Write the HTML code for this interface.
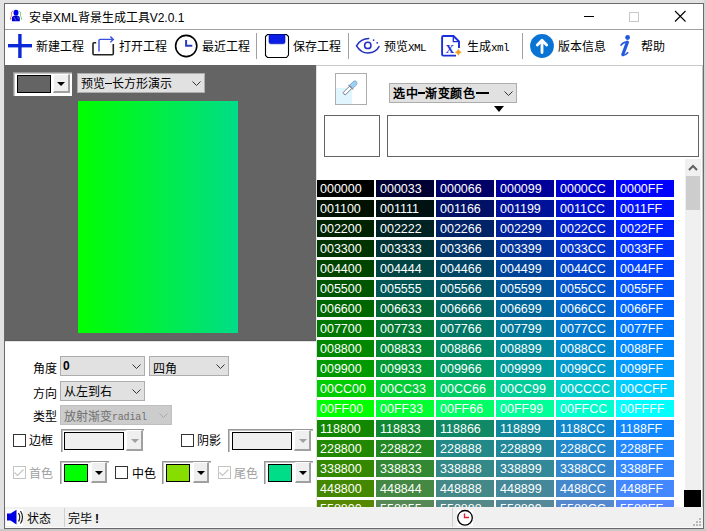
<!DOCTYPE html>
<html lang="zh-CN">
<head>
<meta charset="utf-8">
<style>
html,body{margin:0;padding:0;}
body{width:706px;height:531px;overflow:hidden;position:relative;background:#e2e2e2;font-family:"Liberation Sans",sans-serif;font-size:12px;color:#000;}
.a{position:absolute;}
.t{position:absolute;white-space:nowrap;line-height:16px;font-size:12px;}
.win{left:4px;top:3px;width:700px;height:526px;box-sizing:border-box;border:1px solid #6a6a6a;background:#fff;}
.sep{position:absolute;width:1px;background:#a0a0a0;}
.cb{position:absolute;box-sizing:border-box;border:1px solid #adadad;background:#e1e1e1;height:20px;}
.cb.dis{background:#cccccc;border-color:#bfbfbf;}
.chev{position:absolute;width:9px;height:5px;}
.cell{position:absolute;width:58px;height:17px;color:#fff;font-size:12.5px;line-height:19px;text-indent:4px;white-space:nowrap;overflow:hidden;}
.chk{position:absolute;width:13px;height:13px;box-sizing:border-box;border:1px solid #333;background:#fff;}
.chk.dis{border-color:#c4c4c4;}
.cc{position:absolute;box-sizing:border-box;background:#fff;border-top:1px solid #969696;border-left:1px solid #969696;box-shadow:inset 1px 1px 0 #c4c4c4;}
.sw{position:absolute;box-sizing:border-box;border:1px solid #000;}
.btn{position:absolute;box-sizing:border-box;background:#efefef;border-top:1px solid #fff;border-left:1px solid #fff;border-right:2px solid #a0a0a0;border-bottom:2px solid #a0a0a0;}
.tri{position:absolute;width:0;height:0;border-left:4px solid transparent;border-right:4px solid transparent;border-top:4px solid #000;}
.mono{font-family:"Liberation Mono",monospace;font-size:11px;letter-spacing:-0.6px;}
.dash{display:inline-block;height:1px;background:currentColor;vertical-align:4px;}
</style>
</head>
<body>
<div class="a" style="left:704px;top:0;width:2px;height:531px;background:#d3d3d3"></div>
<div class="a" style="left:0;top:529px;width:706px;height:2px;background:#c8c8c8"></div>
<div class="a win"></div>
<!-- title bar -->
<div class="a" style="left:5px;top:29px;width:698px;height:1px;background:#a0a0a0"></div>
<div class="t" style="left:29px;top:10px;">安卓XML背景生成工具V2.0.1</div>
<div class="a" style="left:584px;top:16px;width:10px;height:1px;background:#000"></div>
<div class="a" style="left:629px;top:12px;width:10px;height:10px;box-sizing:border-box;border:1px solid #c8c8c8"></div>
<!-- toolbar -->
<div class="t" style="left:36px;top:39px;">新建工程</div>
<div class="t" style="left:119px;top:39px;">打开工程</div>
<div class="t" style="left:202px;top:39px;">最近工程</div>
<div class="t" style="left:293px;top:39px;">保存工程</div>
<div class="t" style="left:384px;top:39px;">预览<span class="mono">XML</span></div>
<div class="t" style="left:467px;top:39px;">生成<span class="mono">xml</span></div>
<div class="t" style="left:558px;top:39px;">版本信息</div>
<div class="t" style="left:641px;top:39px;">帮助</div>
<div class="sep" style="left:256px;top:33px;height:26px"></div>
<div class="sep" style="left:348px;top:33px;height:26px"></div>
<div class="sep" style="left:522px;top:33px;height:26px"></div>
<!-- right panel top line -->
<div class="a" style="left:316px;top:65px;width:387px;height:1px;background:#c8c8c8"></div>
<div class="a" style="left:316px;top:66px;width:1px;height:441px;background:#e0e0e0"></div>
<!-- dark panel -->
<div class="a" style="left:5px;top:65px;width:311px;height:276px;background:#646464"></div>
<div class="a" style="left:5px;top:340px;width:311px;height:1px;background:#5c5c5c"></div>
<div class="a" style="left:5px;top:341px;width:311px;height:1px;background:#e4e4e4"></div>
<div class="cc" style="left:13px;top:72px;width:59px;height:24px;"></div>
<div class="sw" style="left:17px;top:75px;width:34px;height:18px;background:#646464"></div>
<div class="btn" style="left:53px;top:74px;width:17px;height:19px;"></div>
<div class="tri" style="left:57px;top:82px;"></div>
<div class="cb" style="left:77px;top:73px;width:128px;"></div>
<div class="t" style="left:81px;top:76px;">预览<span class="dash" style="width:7px"></span>长方形演示</div>
<svg class="chev" style="left:192px;top:81px" viewBox="0 0 9 5"><path d="M0.5 0.5L4.5 4.5L8.5 0.5" fill="none" stroke="#333" stroke-width="1"/></svg>
<div class="a" style="left:78px;top:101px;width:160px;height:232px;background:linear-gradient(to right,#00ff00,#00dd88)"></div>
<!-- lower left panel -->
<div class="t" style="left:33px;top:361px;">角度</div>
<div class="t" style="left:33px;top:386px;">方向</div>
<div class="t" style="left:33px;top:409px;">类型</div>
<div class="cb" style="left:60px;top:356px;width:85px;"></div>
<div class="t" style="left:63px;top:358px;font-weight:bold;font-size:12px;">0</div>
<svg class="chev" style="left:132px;top:364px" viewBox="0 0 9 5"><path d="M0.5 0.5L4.5 4.5L8.5 0.5" fill="none" stroke="#333" stroke-width="1"/></svg>
<div class="cb" style="left:149px;top:356px;width:80px;"></div>
<div class="t" style="left:153px;top:361px;">四角</div>
<svg class="chev" style="left:216px;top:364px" viewBox="0 0 9 5"><path d="M0.5 0.5L4.5 4.5L8.5 0.5" fill="none" stroke="#333" stroke-width="1"/></svg>
<div class="cb" style="left:60px;top:381px;width:85px;"></div>
<div class="t" style="left:64px;top:384px;">从左到右</div>
<svg class="chev" style="left:132px;top:389px" viewBox="0 0 9 5"><path d="M0.5 0.5L4.5 4.5L8.5 0.5" fill="none" stroke="#333" stroke-width="1"/></svg>
<div class="cb dis" style="left:60px;top:405px;width:112px;"></div>
<div class="t" style="left:64px;top:409px;color:#707070">放射渐变<span class="mono" style="font-size:10px;letter-spacing:-0.2px;vertical-align:1.5px">radial</span></div>
<svg class="chev" style="left:159px;top:413px" viewBox="0 0 9 5"><path d="M0.5 0.5L4.5 4.5L8.5 0.5" fill="none" stroke="#a8a8a8" stroke-width="1"/></svg>

<div class="chk" style="left:13px;top:434px;"></div>
<div class="t" style="left:29px;top:433px;">边框</div>
<div class="cc" style="left:61px;top:429px;width:83px;height:23px;"></div>
<div class="sw" style="left:64px;top:432px;width:60px;height:18px;background:#f0f0f0"></div>
<div class="btn" style="left:126px;top:430px;width:17px;height:21px;"></div>
<div class="tri" style="left:131px;top:439px;border-top-color:#a0a0a0"></div>

<div class="chk" style="left:181px;top:434px;"></div>
<div class="t" style="left:197px;top:433px;">阴影</div>
<div class="cc" style="left:228px;top:429px;width:85px;height:23px;"></div>
<div class="sw" style="left:232px;top:432px;width:60px;height:18px;background:#f0f0f0"></div>
<div class="btn" style="left:294px;top:430px;width:17px;height:21px;"></div>
<div class="tri" style="left:299px;top:439px;border-top-color:#a0a0a0"></div>

<div class="chk dis" style="left:13px;top:466px;"></div>
<svg class="a" style="left:13px;top:466px" width="13" height="13" viewBox="0 0 13 13"><path d="M1.5 6.5L4.5 9.5L10.5 3.5" fill="none" stroke="#c4c4c4" stroke-width="1.1"/></svg>
<div class="t" style="left:29px;top:466px;color:#a0a0a0">首色</div>
<div class="cc" style="left:60px;top:461px;width:49px;height:23px;"></div>
<div class="sw" style="left:64px;top:464px;width:24px;height:18px;background:#00ff00"></div>
<div class="btn" style="left:91px;top:462px;width:16px;height:21px;"></div>
<div class="tri" style="left:95px;top:471px;"></div>

<div class="chk" style="left:115px;top:466px;"></div>
<div class="t" style="left:132px;top:466px;">中色</div>
<div class="cc" style="left:162px;top:461px;width:49px;height:23px;"></div>
<div class="sw" style="left:166px;top:464px;width:24px;height:18px;background:#88dd00"></div>
<div class="btn" style="left:193px;top:462px;width:16px;height:21px;"></div>
<div class="tri" style="left:197px;top:471px;"></div>

<div class="chk dis" style="left:218px;top:466px;"></div>
<svg class="a" style="left:218px;top:466px" width="13" height="13" viewBox="0 0 13 13"><path d="M1.5 6.5L4.5 9.5L10.5 3.5" fill="none" stroke="#c4c4c4" stroke-width="1.1"/></svg>
<div class="t" style="left:234px;top:466px;color:#a0a0a0">尾色</div>
<div class="cc" style="left:264px;top:461px;width:49px;height:23px;"></div>
<div class="sw" style="left:268px;top:464px;width:24px;height:18px;background:#00dd88"></div>
<div class="btn" style="left:295px;top:462px;width:16px;height:21px;"></div>
<div class="tri" style="left:299px;top:471px;"></div>

<!-- right top -->
<div class="a" style="left:335px;top:73px;width:32px;height:32px;box-sizing:border-box;border:1px solid #adadad;background:#fff"></div>
<div class="a" style="left:336px;top:88px;width:16px;height:16px;background:#e0f5fd"></div>
<div class="cb" style="left:389px;top:83px;width:128px;"></div>
<div class="t" style="left:393px;top:86px;font-weight:bold;letter-spacing:0.5px">选中<span class="dash" style="width:7px;height:2px"></span>渐变颜色<span class="dash" style="width:13px;height:2px;margin-left:1px"></span></div>
<svg class="chev" style="left:504px;top:91px" viewBox="0 0 9 5"><path d="M0.5 0.5L4.5 4.5L8.5 0.5" fill="none" stroke="#333" stroke-width="1"/></svg>
<div class="a" style="left:494px;top:106px;width:0;height:0;border-left:5px solid transparent;border-right:5px solid transparent;border-top:6px solid #000"></div>
<div class="a" style="left:324px;top:115px;width:56px;height:42px;box-sizing:border-box;border:1px solid #646464;"></div>
<div class="a" style="left:387px;top:115px;width:312px;height:42px;box-sizing:border-box;border:1px solid #646464;"></div>

<!-- grid -->
<div class="a" style="left:317px;top:159px;width:368px;height:348px;overflow:hidden;">
<div class="cell" style="left:-1px;top:21px;background:#000000">000000</div>
<div class="cell" style="left:59px;top:21px;background:#000033">000033</div>
<div class="cell" style="left:119px;top:21px;background:#000066">000066</div>
<div class="cell" style="left:179px;top:21px;background:#000099">000099</div>
<div class="cell" style="left:239px;top:21px;background:#0000CC">0000CC</div>
<div class="cell" style="left:299px;top:21px;background:#0000FF">0000FF</div>
<div class="cell" style="left:-1px;top:41px;background:#001100">001100</div>
<div class="cell" style="left:59px;top:41px;background:#001111">001111</div>
<div class="cell" style="left:119px;top:41px;background:#001166">001166</div>
<div class="cell" style="left:179px;top:41px;background:#001199">001199</div>
<div class="cell" style="left:239px;top:41px;background:#0011CC">0011CC</div>
<div class="cell" style="left:299px;top:41px;background:#0011FF">0011FF</div>
<div class="cell" style="left:-1px;top:61px;background:#002200">002200</div>
<div class="cell" style="left:59px;top:61px;background:#002222">002222</div>
<div class="cell" style="left:119px;top:61px;background:#002266">002266</div>
<div class="cell" style="left:179px;top:61px;background:#002299">002299</div>
<div class="cell" style="left:239px;top:61px;background:#0022CC">0022CC</div>
<div class="cell" style="left:299px;top:61px;background:#0022FF">0022FF</div>
<div class="cell" style="left:-1px;top:81px;background:#003300">003300</div>
<div class="cell" style="left:59px;top:81px;background:#003333">003333</div>
<div class="cell" style="left:119px;top:81px;background:#003366">003366</div>
<div class="cell" style="left:179px;top:81px;background:#003399">003399</div>
<div class="cell" style="left:239px;top:81px;background:#0033CC">0033CC</div>
<div class="cell" style="left:299px;top:81px;background:#0033FF">0033FF</div>
<div class="cell" style="left:-1px;top:101px;background:#004400">004400</div>
<div class="cell" style="left:59px;top:101px;background:#004444">004444</div>
<div class="cell" style="left:119px;top:101px;background:#004466">004466</div>
<div class="cell" style="left:179px;top:101px;background:#004499">004499</div>
<div class="cell" style="left:239px;top:101px;background:#0044CC">0044CC</div>
<div class="cell" style="left:299px;top:101px;background:#0044FF">0044FF</div>
<div class="cell" style="left:-1px;top:121px;background:#005500">005500</div>
<div class="cell" style="left:59px;top:121px;background:#005555">005555</div>
<div class="cell" style="left:119px;top:121px;background:#005566">005566</div>
<div class="cell" style="left:179px;top:121px;background:#005599">005599</div>
<div class="cell" style="left:239px;top:121px;background:#0055CC">0055CC</div>
<div class="cell" style="left:299px;top:121px;background:#0055FF">0055FF</div>
<div class="cell" style="left:-1px;top:141px;background:#006600">006600</div>
<div class="cell" style="left:59px;top:141px;background:#006633">006633</div>
<div class="cell" style="left:119px;top:141px;background:#006666">006666</div>
<div class="cell" style="left:179px;top:141px;background:#006699">006699</div>
<div class="cell" style="left:239px;top:141px;background:#0066CC">0066CC</div>
<div class="cell" style="left:299px;top:141px;background:#0066FF">0066FF</div>
<div class="cell" style="left:-1px;top:161px;background:#007700">007700</div>
<div class="cell" style="left:59px;top:161px;background:#007733">007733</div>
<div class="cell" style="left:119px;top:161px;background:#007766">007766</div>
<div class="cell" style="left:179px;top:161px;background:#007799">007799</div>
<div class="cell" style="left:239px;top:161px;background:#0077CC">0077CC</div>
<div class="cell" style="left:299px;top:161px;background:#0077FF">0077FF</div>
<div class="cell" style="left:-1px;top:181px;background:#008800">008800</div>
<div class="cell" style="left:59px;top:181px;background:#008833">008833</div>
<div class="cell" style="left:119px;top:181px;background:#008866">008866</div>
<div class="cell" style="left:179px;top:181px;background:#008899">008899</div>
<div class="cell" style="left:239px;top:181px;background:#0088CC">0088CC</div>
<div class="cell" style="left:299px;top:181px;background:#0088FF">0088FF</div>
<div class="cell" style="left:-1px;top:201px;background:#009900">009900</div>
<div class="cell" style="left:59px;top:201px;background:#009933">009933</div>
<div class="cell" style="left:119px;top:201px;background:#009966">009966</div>
<div class="cell" style="left:179px;top:201px;background:#009999">009999</div>
<div class="cell" style="left:239px;top:201px;background:#0099CC">0099CC</div>
<div class="cell" style="left:299px;top:201px;background:#0099FF">0099FF</div>
<div class="cell" style="left:-1px;top:221px;background:#00CC00">00CC00</div>
<div class="cell" style="left:59px;top:221px;background:#00CC33">00CC33</div>
<div class="cell" style="left:119px;top:221px;background:#00CC66">00CC66</div>
<div class="cell" style="left:179px;top:221px;background:#00CC99">00CC99</div>
<div class="cell" style="left:239px;top:221px;background:#00CCCC">00CCCC</div>
<div class="cell" style="left:299px;top:221px;background:#00CCFF">00CCFF</div>
<div class="cell" style="left:-1px;top:241px;background:#00FF00">00FF00</div>
<div class="cell" style="left:59px;top:241px;background:#00FF33">00FF33</div>
<div class="cell" style="left:119px;top:241px;background:#00FF66">00FF66</div>
<div class="cell" style="left:179px;top:241px;background:#00FF99">00FF99</div>
<div class="cell" style="left:239px;top:241px;background:#00FFCC">00FFCC</div>
<div class="cell" style="left:299px;top:241px;background:#00FFFF">00FFFF</div>
<div class="cell" style="left:-1px;top:261px;background:#118800">118800</div>
<div class="cell" style="left:59px;top:261px;background:#118833">118833</div>
<div class="cell" style="left:119px;top:261px;background:#118866">118866</div>
<div class="cell" style="left:179px;top:261px;background:#118899">118899</div>
<div class="cell" style="left:239px;top:261px;background:#1188CC">1188CC</div>
<div class="cell" style="left:299px;top:261px;background:#1188FF">1188FF</div>
<div class="cell" style="left:-1px;top:281px;background:#228800">228800</div>
<div class="cell" style="left:59px;top:281px;background:#228822">228822</div>
<div class="cell" style="left:119px;top:281px;background:#228888">228888</div>
<div class="cell" style="left:179px;top:281px;background:#228899">228899</div>
<div class="cell" style="left:239px;top:281px;background:#2288CC">2288CC</div>
<div class="cell" style="left:299px;top:281px;background:#2288FF">2288FF</div>
<div class="cell" style="left:-1px;top:301px;background:#338800">338800</div>
<div class="cell" style="left:59px;top:301px;background:#338833">338833</div>
<div class="cell" style="left:119px;top:301px;background:#338888">338888</div>
<div class="cell" style="left:179px;top:301px;background:#338899">338899</div>
<div class="cell" style="left:239px;top:301px;background:#3388CC">3388CC</div>
<div class="cell" style="left:299px;top:301px;background:#3388FF">3388FF</div>
<div class="cell" style="left:-1px;top:321px;background:#448800">448800</div>
<div class="cell" style="left:59px;top:321px;background:#448844">448844</div>
<div class="cell" style="left:119px;top:321px;background:#448888">448888</div>
<div class="cell" style="left:179px;top:321px;background:#448899">448899</div>
<div class="cell" style="left:239px;top:321px;background:#4488CC">4488CC</div>
<div class="cell" style="left:299px;top:321px;background:#4488FF">4488FF</div>
<div class="cell" style="left:-1px;top:341px;background:#558800">558800</div>
<div class="cell" style="left:59px;top:341px;background:#558855">558855</div>
<div class="cell" style="left:119px;top:341px;background:#558888">558888</div>
<div class="cell" style="left:179px;top:341px;background:#558899">558899</div>
<div class="cell" style="left:239px;top:341px;background:#5588CC">5588CC</div>
<div class="cell" style="left:299px;top:341px;background:#5588FF">5588FF</div></div>
<!-- scrollbar -->
<div class="a" style="left:702px;top:66px;width:1px;height:441px;background:#c8c8c8"></div>
<div class="a" style="left:685px;top:159px;width:16px;height:331px;background:#f0f0f0"></div>
<div class="a" style="left:686px;top:176px;width:14px;height:34px;background:#cdcdcd"></div>
<svg class="a" style="left:688px;top:164px" width="10" height="8" viewBox="0 0 10 8"><path d="M1 6L5 2L9 6" fill="none" stroke="#606060" stroke-width="2"/></svg>
<div class="a" style="left:684px;top:490px;width:17px;height:17px;background:#000"></div>

<!-- status bar -->
<div class="a" style="left:5px;top:507px;width:698px;height:20px;background:#f0f0f0"></div>
<div class="a" style="left:5px;top:527px;width:698px;height:1px;background:#fafafa"></div>
<div class="t" style="left:27px;top:511px;">状态</div>
<div class="sep" style="left:64px;top:508px;height:19px;background:#d0d0d0"></div>
<div class="t" style="left:68px;top:511px;">完毕<span style="font-weight:bold;margin-left:3px">!</span></div>
<div class="sep" style="left:452px;top:508px;height:19px;background:#d0d0d0"></div>
<svg class="a" style="left:0;top:0" width="706" height="531" viewBox="0 0 706 531">
 <!-- close -->
 <path d="M675 11L685.5 21.5M685.5 11L675 21.5" stroke="#000" stroke-width="1.1" fill="none"/>
 <!-- title icon -->
 <g>
  <path d="M13.2 10.8Q11 11.8 11.4 14.2Q11.8 15.8 11.2 16.6Q10.3 17.6 10.3 19.8" fill="none" stroke="#d85050" stroke-width="0.9" opacity="0.85"/>
  <path d="M18.8 10.8Q21 11.8 20.6 14.2Q20.2 15.8 20.8 16.6Q21.7 17.6 21.7 19.8" fill="none" stroke="#50c050" stroke-width="0.9" opacity="0.85"/>
  <ellipse cx="16" cy="12.7" rx="2.5" ry="2.9" fill="#0000f0"/>
  <path d="M11.9 21.2V18.2Q11.9 15.4 16 15.4Q19.8 15.4 19.8 18.2V21.2Z" fill="#0000d0"/>
  <path d="M14 17L16 20.5M17.5 16.8L18.5 19" stroke="#8080d0" stroke-width="0.7"/>
 </g>
 <!-- plus -->
 <rect x="8" y="44" width="24" height="3.4" fill="#0a28d8"/>
 <rect x="18.2" y="34" width="3.4" height="24" fill="#0a28d8"/>
 <!-- open -->
 <path d="M96.2 42.8H94Q93 42.8 93 43.8V53.8Q93 54.8 94 54.8H112.3Q113.3 54.8 113.3 53.8V44" fill="none" stroke="#222" stroke-width="1.6"/>
 <path d="M99 51.5V40.5Q99 39.4 100 39.4H113M110.4 36.5L113.3 39.4L110.4 42.2" fill="none" stroke="#3a4ee0" stroke-width="1.4"/>
 <!-- clock -->
 <circle cx="186.2" cy="46" r="10.6" fill="none" stroke="#000" stroke-width="1.6"/>
 <path d="M186.1 40V45.7H192.3" fill="none" stroke="#2a3cc0" stroke-width="2"/>
 <!-- save -->
 <path d="M267.5 34.5H286.5L288.5 36.5V55L286.5 57.5H267.5L265.5 55.5V36.5Z" fill="#fff" stroke="#000" stroke-width="1.1"/>
 <path d="M269 34.5H285V42Q285 43.8 283.2 43.8H270.8Q269 43.8 269 42Z" fill="#0a1ee6" stroke="#0010a0" stroke-width="0.6"/>
 <!-- eye -->
 <path d="M369.3 38.6Q361 38.4 356.5 45.8Q361 53 368 53Q375.5 53 379.4 46.2" fill="none" stroke="#2030c0" stroke-width="1.5"/>
 <circle cx="367.8" cy="45.4" r="3.2" fill="none" stroke="#2030c0" stroke-width="1.5"/>
 <circle cx="373.6" cy="40.1" r="0.9" fill="#2030c0"/>
 <circle cx="377.2" cy="42.8" r="0.9" fill="#2030c0"/>
 <!-- xml file -->
 <path d="M456 55.6H443.3Q442.1 55.6 442.1 54.4V37.2Q442.1 36 443.3 36H453.5L459 41.5V48" fill="none" stroke="#1a30d8" stroke-width="1.9"/>
 <path d="M453.3 36.2V41.6H459" fill="none" stroke="#1a30d8" stroke-width="1.3"/>
 <text x="445.4" y="52.9" font-family="Liberation Serif" font-size="12" font-weight="bold" fill="#1a30d8">X</text>
 <path d="M458.3 48.8L459.6 51L461.8 52.3L459.6 53.6L458.3 55.8L457 53.6L454.8 52.3L457 51Z" fill="#f0a020"/>
 <!-- upload -->
 <circle cx="542" cy="46" r="11.9" fill="#0a74d4"/>
 <path d="M542 52.5V40.5M537.3 45L542 40.2L546.7 45" fill="none" stroke="#fff" stroke-width="2.8" stroke-linecap="round" stroke-linejoin="round"/>
 <!-- info -->
 <circle cx="627.6" cy="37.5" r="2.4" fill="#2458e0"/>
 <path d="M620.6 45.6Q623.5 41.5 627.3 42.2" fill="none" stroke="#2458e0" stroke-width="1.6"/>
 <path d="M627.4 42.2L622.8 54.5" fill="none" stroke="#2458e0" stroke-width="3.2" stroke-linecap="round"/>
 <path d="M622.3 55.4Q625 56 628.2 52.3" fill="none" stroke="#2458e0" stroke-width="1.6"/>
 <!-- eyedropper -->
 <g transform="rotate(-45 350.5 87.5)">
  <path d="M341.8 85.9H351V89.1H341.8Q340.6 87.5 341.8 85.9Z" fill="#fff" stroke="#707a84" stroke-width="0.9"/>
  <path d="M351 84.2V90.8" stroke="#707a84" stroke-width="1"/>
  <path d="M351.6 85.2H356.2Q358.8 85.2 358.8 87.5Q358.8 89.8 356.2 89.8H351.6Z" fill="#9ccff5" stroke="#7aa0c4" stroke-width="0.8"/>
 </g>
 <!-- status speaker -->
 <rect x="6" y="509" width="17" height="17" fill="#fff"/>
 <path d="M7 513.5H10.5L16.5 509.8V524.5L10.5 520.5H7Z" fill="#0000e0"/>
 <path d="M18.5 513Q21 517.2 18.5 521.5" fill="none" stroke="#222" stroke-width="1.2"/>
 <path d="M20.5 511Q24.5 517.2 20.5 523.5" fill="none" stroke="#222" stroke-width="1.2"/>
 <!-- status clock -->
 <rect x="457" y="510" width="16" height="16" fill="#fff"/>
 <circle cx="465" cy="517.8" r="7.3" fill="none" stroke="#000" stroke-width="1.3"/>
 <path d="M464.5 513.5V517.5H469" fill="none" stroke="#e02030" stroke-width="1.4"/>
 <!-- size grip -->
 <g fill="#b8b8b8">
  <rect x="699" y="518" width="2" height="2"/>
  <rect x="696" y="521" width="2" height="2"/><rect x="699" y="521" width="2" height="2"/>
  <rect x="693" y="524" width="2" height="2"/><rect x="696" y="524" width="2" height="2"/><rect x="699" y="524" width="2" height="2"/>
 </g>
</svg>
</body>
</html>
